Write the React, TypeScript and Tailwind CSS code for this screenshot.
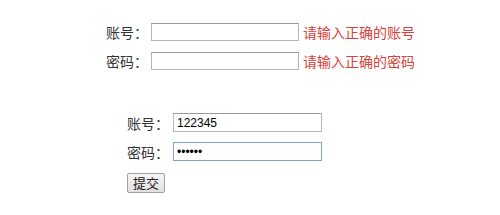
import { useState } from "react";

const labelCls = "text-[14px] leading-none text-[#333]";
const baseInput =
  "h-[18px] border bg-white px-[3px] text-[12px] leading-none text-black outline-none font-['Liberation_Sans',Arial,sans-serif]";
const inputCls = `${baseInput} border-[#b5b5b5] border-t-[#9a9a9a]`;
const focusedCls = `${baseInput} border-[#7da2ce]`;

export default function App() {
  const [account, setAccount] = useState("122345");
  const [password, setPassword] = useState("123456");

  return (
    <div className="h-[215px] w-[500px] bg-white font-['Noto_Sans_CJK_SC','Noto_Sans',sans-serif]">
      {/* validation form */}
      <div className="flex flex-col gap-[11px] pt-[23px] pl-[106px]">
        <div className="flex items-center">
          <span className={`${labelCls} w-[45px]`}>账号：</span>
          <input className={`${inputCls} w-[148px]`} />
          <span className="ml-[4px] text-[14px] leading-none text-[#d9413b]">请输入正确的账号</span>
        </div>
        <div className="flex items-center">
          <span className={`${labelCls} w-[45px]`}>密码：</span>
          <input type="password" className={`${inputCls} w-[148px]`} />
          <span className="ml-[4px] text-[14px] leading-none text-[#d9413b]">请输入正确的密码</span>
        </div>
      </div>

      {/* filled form */}
      <div className="flex flex-col gap-[10px] pt-[43px] pl-[127px]">
        <div className="flex items-center">
          <span className={`${labelCls} w-[46px]`}>账号：</span>
          <input
            className={`${inputCls} h-[19px] w-[149px]`}
            value={account}
            onChange={(e) => setAccount(e.target.value)}
          />
        </div>
        <div className="flex items-center">
          <span className={`${labelCls} w-[46px]`}>密码：</span>
          <input
            type="password"
            className={`${focusedCls} h-[19px] w-[149px]`}
            value={password}
            onChange={(e) => setPassword(e.target.value)}
          />
        </div>
      </div>
      <div className="pt-[8px] pl-[127px]">
        <button className="h-[20px] w-[38px] rounded-[2px] border border-[#a0a0a0] bg-gradient-to-b from-[#f6f6f6] to-[#e0e0e0] text-[13px] leading-none text-[#222]">
          提交
        </button>
      </div>
    </div>
  );
}
